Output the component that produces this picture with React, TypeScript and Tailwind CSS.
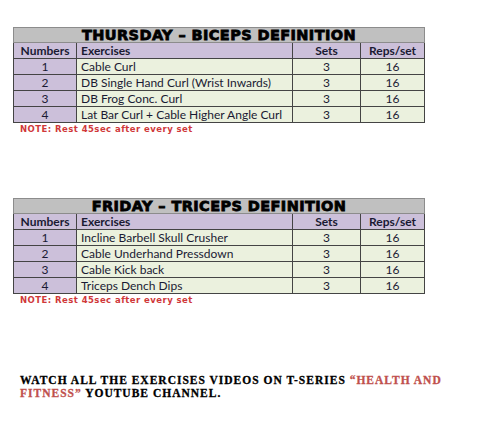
const thursday = [
  ["1", "Cable Curl"],
  ["2", "DB Single Hand Curl (Wrist Inwards)"],
  ["3", "DB Frog Conc. Curl"],
  ["4", "Lat Bar Curl + Cable Higher Angle Curl"],
];

const friday = [
  ["1", "Incline Barbell Skull Crusher"],
  ["2", "Cable Underhand Pressdown"],
  ["3", "Cable Kick back"],
  ["4", "Triceps Dench Dips"],
];

function Workout({ title, rows }: { title: string; rows: string[][] }) {
  return (
    <div>
      <table className="border-collapse w-[411px] table-fixed border border-[#8c8c8c] font-['Lato',sans-serif] text-[12px] text-[#1a1a33]">
        <colgroup>
          <col className="w-[63px]" />
          <col className="w-[216px]" />
          <col className="w-[68px]" />
          <col className="w-[64px]" />
        </colgroup>
        <thead>
          <tr className="h-[15px] bg-[#c0c0c0]">
            <th
              colSpan={4}
              className="border border-[#8c8c8c] p-0 leading-[14px] text-[14.5px] font-black tracking-[0.4px] text-black font-['DejaVu_Sans',sans-serif] [-webkit-text-stroke:0.8px_black]"
            >
              {title}
            </th>
          </tr>
          <tr className="h-[16px] bg-[#ccc0da]">
            <th className="border border-[#444] p-0 leading-[15px] font-bold">Numbers</th>
            <th className="border border-[#444] p-0 pl-[4px] leading-[15px] text-left font-bold">Exercises</th>
            <th className="border border-[#444] p-0 leading-[15px] font-bold">Sets</th>
            <th className="border border-[#444] p-0 leading-[15px] font-bold">Reps/set</th>
          </tr>
        </thead>
        <tbody>
          {rows.map(([n, name]) => (
            <tr key={n} className="h-[16px]">
              <td className="border border-[#444] bg-[#ccc0da] p-0 leading-[15px] text-center">{n}</td>
              <td className="border border-[#444] bg-[#ebf1de] p-0 pl-[4px] leading-[15px] whitespace-nowrap">{name}</td>
              <td className="border border-[#444] bg-[#ebf1de] p-0 leading-[15px] text-center">3</td>
              <td className="border border-[#444] bg-[#ebf1de] p-0 leading-[15px] text-center">16</td>
            </tr>
          ))}
        </tbody>
      </table>
      <p className="pl-[7px] pt-[1px] text-[8.5px] leading-[11px] font-bold tracking-[0.45px] text-[#d0383a] font-['DejaVu_Sans',sans-serif]">
        NOTE: Rest 45sec after every set
      </p>
    </div>
  );
}

export default function App() {
  return (
    <div className="w-[481px] h-[440px] bg-white pt-[27px] pl-[13px]">
      <Workout title="THURSDAY – BICEPS DEFINITION" rows={thursday} />
      <div className="mt-[63px]">
        <Workout title="FRIDAY – TRICEPS DEFINITION" rows={friday} />
      </div>
      <div className="mt-[68px] pl-[7px] w-[450px] text-[11.5px] leading-[13px] font-bold tracking-[1px] font-['Liberation_Serif',serif] text-black [-webkit-text-stroke:0.3px_black]">
        <p>
          WATCH ALL THE EXERCISES VIDEOS ON T-SERIES{" "}
          <span className="text-[#c0504d] [-webkit-text-stroke:0.3px_#c0504d]">“HEALTH AND</span>
        </p>
        <p>
          <span className="text-[#c0504d] [-webkit-text-stroke:0.3px_#c0504d]">FITNESS”</span> YOUTUBE CHANNEL.
        </p>
      </div>
    </div>
  );
}
